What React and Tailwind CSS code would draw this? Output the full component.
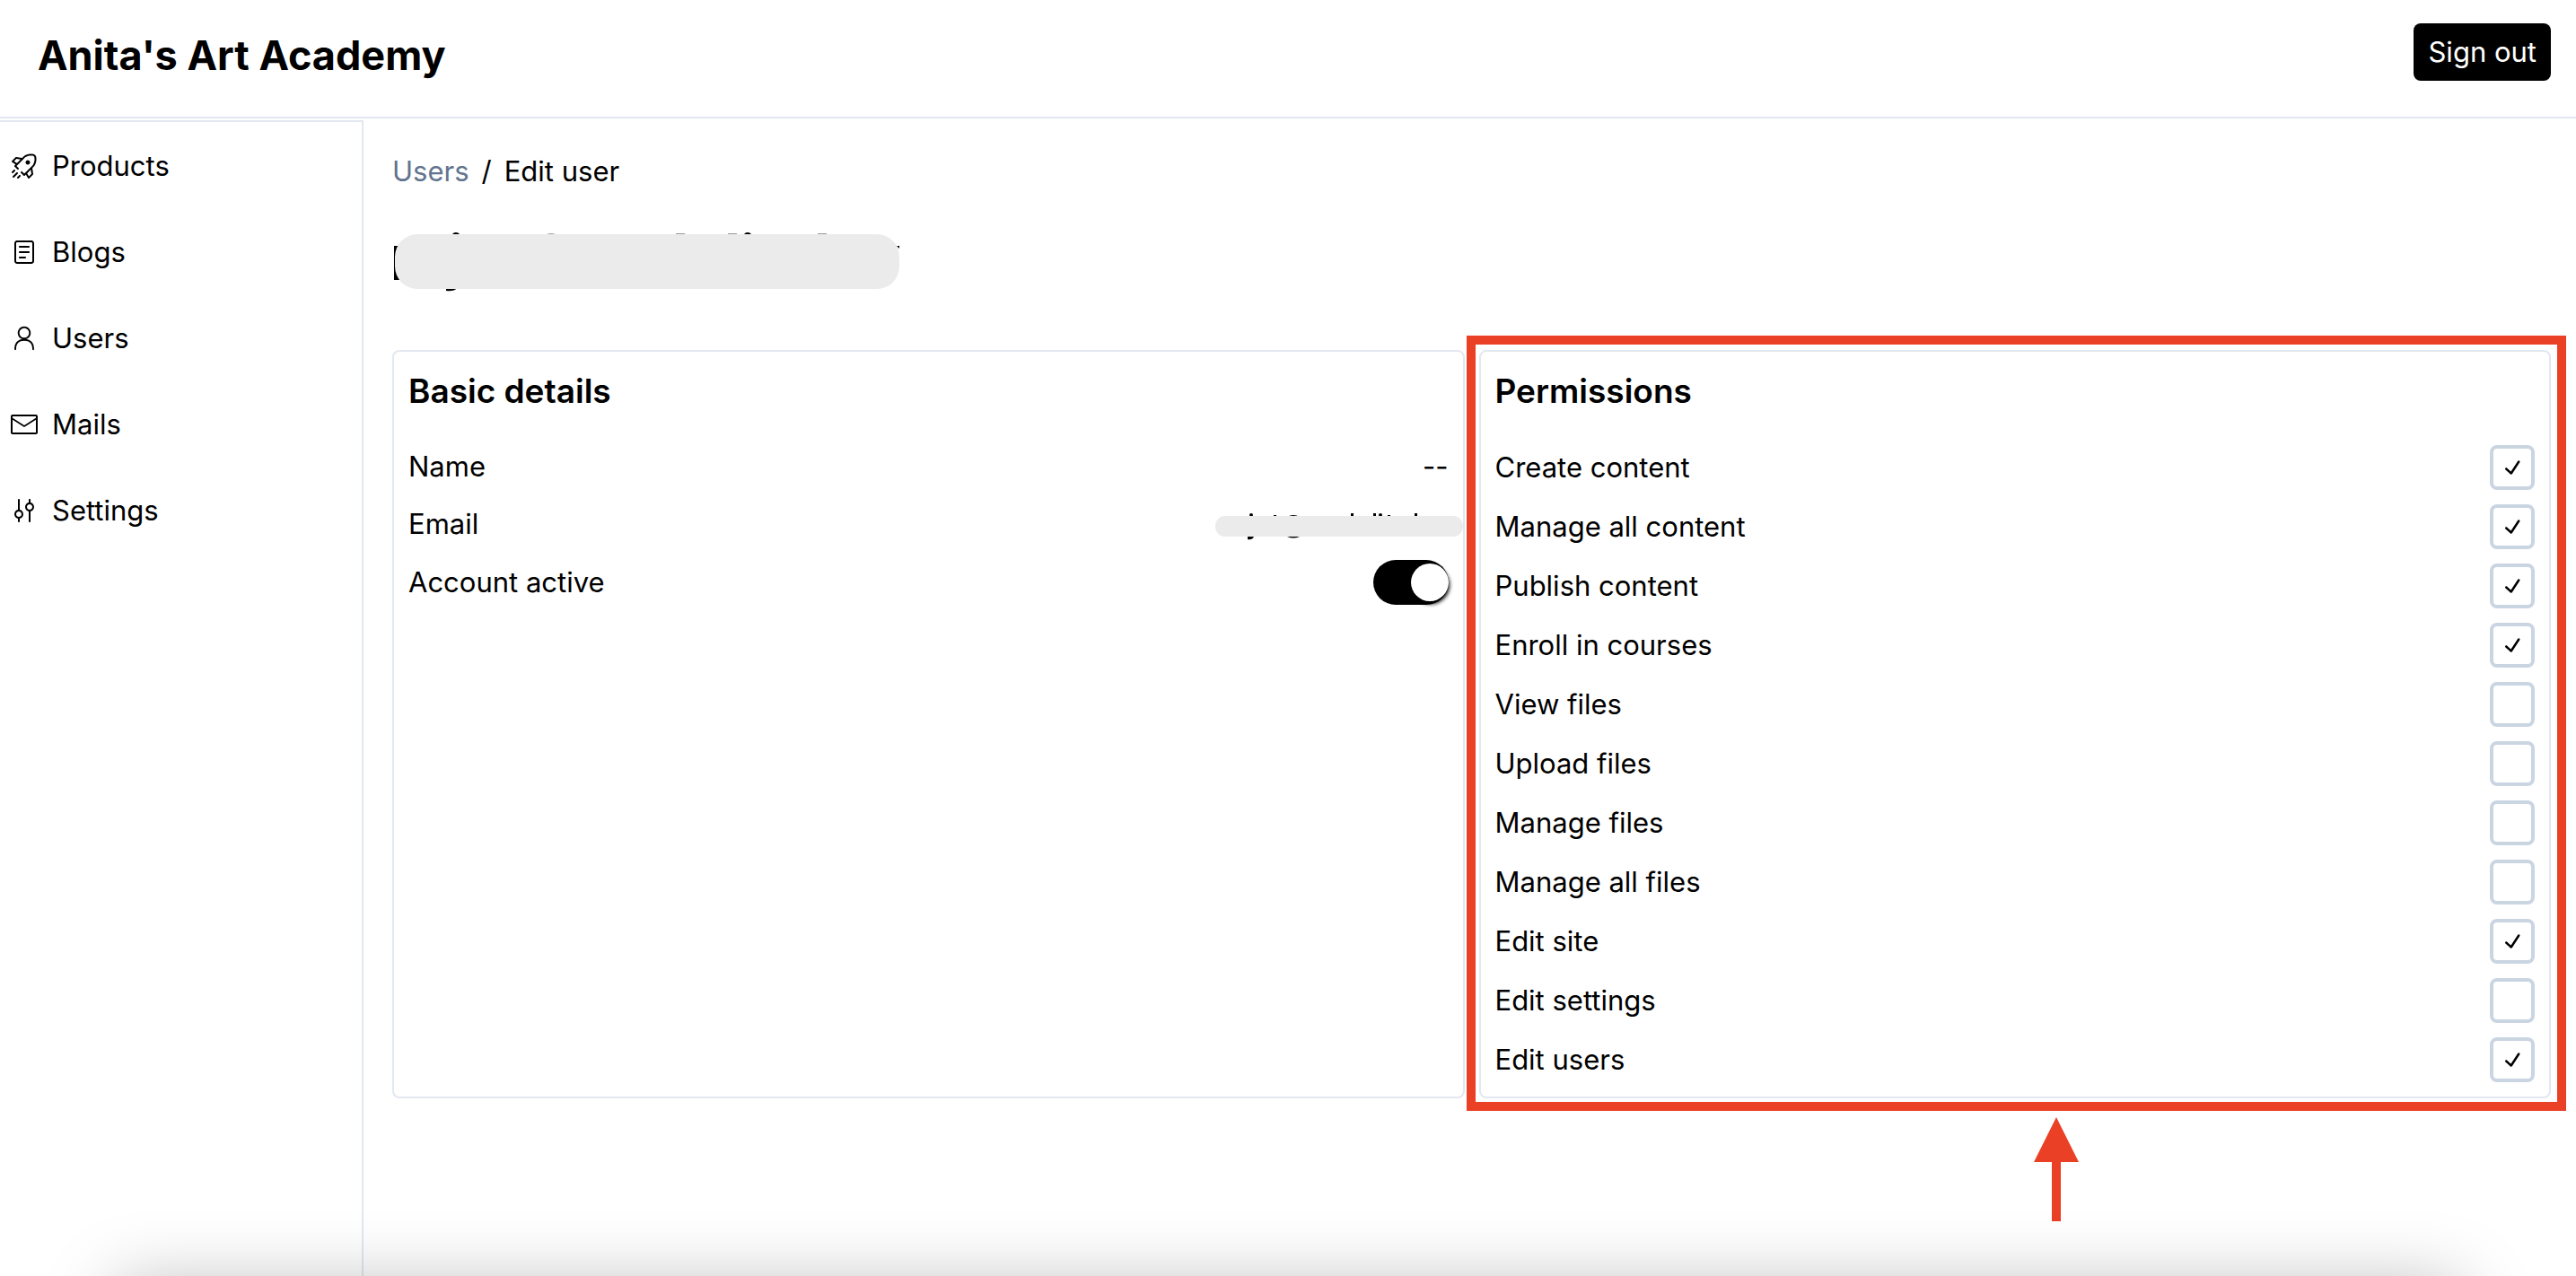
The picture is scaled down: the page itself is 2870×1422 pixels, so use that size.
import { useState } from "react";
import {
  RxRocket,
  RxReader,
  RxPerson,
  RxEnvelopeClosed,
  RxMixerVertical,
  RxCheck,
} from "react-icons/rx";

const navItems = [
  { label: "Products", Icon: RxRocket },
  { label: "Blogs", Icon: RxReader },
  { label: "Users", Icon: RxPerson },
  { label: "Mails", Icon: RxEnvelopeClosed },
  { label: "Settings", Icon: RxMixerVertical },
];

const initialPermissions = [
  { id: "create-content", label: "Create content", granted: true },
  { id: "manage-all-content", label: "Manage all content", granted: true },
  { id: "publish-content", label: "Publish content", granted: true },
  { id: "enroll", label: "Enroll in courses", granted: true },
  { id: "view-files", label: "View files", granted: false },
  { id: "upload-files", label: "Upload files", granted: false },
  { id: "manage-files", label: "Manage files", granted: false },
  { id: "manage-all-files", label: "Manage all files", granted: false },
  { id: "edit-site", label: "Edit site", granted: true },
  { id: "edit-settings", label: "Edit settings", granted: false },
  { id: "edit-users", label: "Edit users", granted: true },
];

function Header() {
  return (
    <header className="flex items-start justify-between border-b-2 border-slate-200 pt-[26px] pr-7 pb-8 pl-[42px]">
      <h1 className="text-[45px] leading-[72px] font-bold">Anita's Art Academy</h1>
      <button type="button" className="h-16 rounded-lg bg-black px-4 text-[31px] leading-[48px] text-white">
        Sign out
      </button>
    </header>
  );
}

function Sidebar() {
  return (
    <nav className="mt-0.5 w-[405px] shrink-0 border-t-2 border-r-2 border-slate-200">
      <ul>
        {navItems.map(({ label, Icon }) => (
          <li key={label}>
            <a href="#" className="flex h-24 items-center gap-4 px-3 pt-0.5">
              <Icon className="size-[30px] shrink-0" />
              {label}
            </a>
          </li>
        ))}
      </ul>
    </nav>
  );
}

/* Grey bar that hides the account name, with traces of the strokes left at its edges. */
function HiddenTitle() {
  return (
    <svg width="568" height="72" viewBox="0 0 568 72" role="img" aria-label="Hidden account name">
      <rect x="2" y="20" width="6" height="38" />
      <circle cx="71" cy="10" r="5" />
      <path d="M60 67h12q-3 4-12 3z" />
      <path d="M172 7q5-2 10 0zM316 6h10v3h-10zM374 6h10v3h-10zM474 6h10v3h-10z" fill="#999" />
      <circle cx="396" cy="10" r="5" />
      <path d="M562 20h3v3z" />
      <rect x="3" y="7" width="562" height="61" rx="25" fill="#ebebeb" />
    </svg>
  );
}

/* Grey bar that hides the e-mail address. */
function HiddenEmail() {
  return (
    <svg width="276" height="40" viewBox="0 -6 276 40" role="img" aria-label="Hidden e-mail">
      <circle cx="40" cy="4" r="2" />
      <path d="M36 28h7q-2 4-7 3z" />
      <path d="M65 4h3v1h-3zM151 2h3v4h-3zM176 2h3v4h-3zM192 4h3v2h-3zM222 2h3v4h-3z" />
      <path d="M80 6q7-4 14 0zM80 28q7 3 14 0z" />
      <circle cx="184" cy="4" r="2" />
      <rect y="5" width="276" height="23" rx="11" fill="#ebebeb" />
    </svg>
  );
}

function BasicDetails() {
  const [active, setActive] = useState(true);
  return (
    <section className="flex flex-col gap-4 rounded-lg border-2 border-slate-200 p-4">
      <h2 className="mb-4 text-[37px] leading-[56px] font-semibold">Basic details</h2>
      <div className="flex h-12 items-center justify-between">
        <p>Name</p>
        <p>--</p>
      </div>
      <div className="flex h-12 items-center justify-between">
        <p>Email</p>
        <div className="-mr-4">
          <HiddenEmail />
        </div>
      </div>
      <div className="flex items-center justify-between">
        <label htmlFor="account-active">Account active</label>
        <input
          id="account-active"
          type="checkbox"
          role="switch"
          checked={active}
          onChange={() => setActive(!active)}
          className="flex h-[50px] w-[84px] appearance-none items-center rounded-full bg-slate-300 before:size-[42px] before:rounded-full before:bg-white before:shadow-[1px_3px_4px_#000] checked:justify-end checked:bg-black"
        />
      </div>
    </section>
  );
}

function Permissions() {
  const [permissions, setPermissions] = useState(initialPermissions);
  const toggle = (id) =>
    setPermissions(permissions.map((p) => (p.id === id ? { ...p, granted: !p.granted } : p)));
  return (
    <section className="flex flex-col gap-4 rounded-lg border-2 border-slate-200 p-4">
      <h2 className="mb-4 text-[37px] leading-[56px] font-semibold">Permissions</h2>
      {permissions.map(({ id, label, granted }) => (
        <div key={id} className="flex items-center justify-between">
          <label htmlFor={id}>{label}</label>
          <span className="grid place-items-center">
            <input
              id={id}
              type="checkbox"
              checked={granted}
              onChange={() => toggle(id)}
              className="peer col-start-1 row-start-1 size-[50px] appearance-none rounded-lg border-4 border-slate-300 bg-white"
            />
            <RxCheck className="pointer-events-none col-start-1 row-start-1 hidden size-[30px] peer-checked:block" />
          </span>
        </div>
      ))}
    </section>
  );
}

/* Red frame and arrow that call out the permissions card. */
function Callout() {
  return (
    <div className="pointer-events-none absolute -top-4 -right-[17px] -bottom-[14px] -left-[14px] border-10 border-[#ea4026]">
      <svg
        className="absolute top-full left-[622px] mt-[17px]"
        width="50"
        height="116"
        viewBox="0 0 50 116"
        fill="#ea4026"
        aria-hidden="true"
      >
        <path d="M25 0 50 50H30V116H20V50H0z" />
      </svg>
    </div>
  );
}

export default function App() {
  return (
    <div className="relative flex min-h-screen flex-col overflow-hidden bg-white font-['Inter',sans-serif] text-[31px] leading-[48px] text-black">
      <Header />
      <div className="flex grow">
        <Sidebar />
        <main className="min-w-0 grow pt-[35px] pr-7 pl-8">
          <nav aria-label="Breadcrumb" className="flex gap-3.5">
            <a href="#" className="text-slate-500">
              Users
            </a>
            <span>/</span>
            <span>Edit user</span>
          </nav>
          <div className="mt-[39px] mb-16 flex">
            <HiddenTitle />
          </div>
          <div className="grid grid-cols-2 gap-4">
            <BasicDetails />
            <div className="relative">
              <Permissions />
              <Callout />
            </div>
          </div>
        </main>
      </div>
      <div className="pointer-events-none absolute inset-x-32 top-full mt-2.5 h-40 shadow-[0_0_80px_rgba(0,0,0,0.27)]" />
    </div>
  );
}
